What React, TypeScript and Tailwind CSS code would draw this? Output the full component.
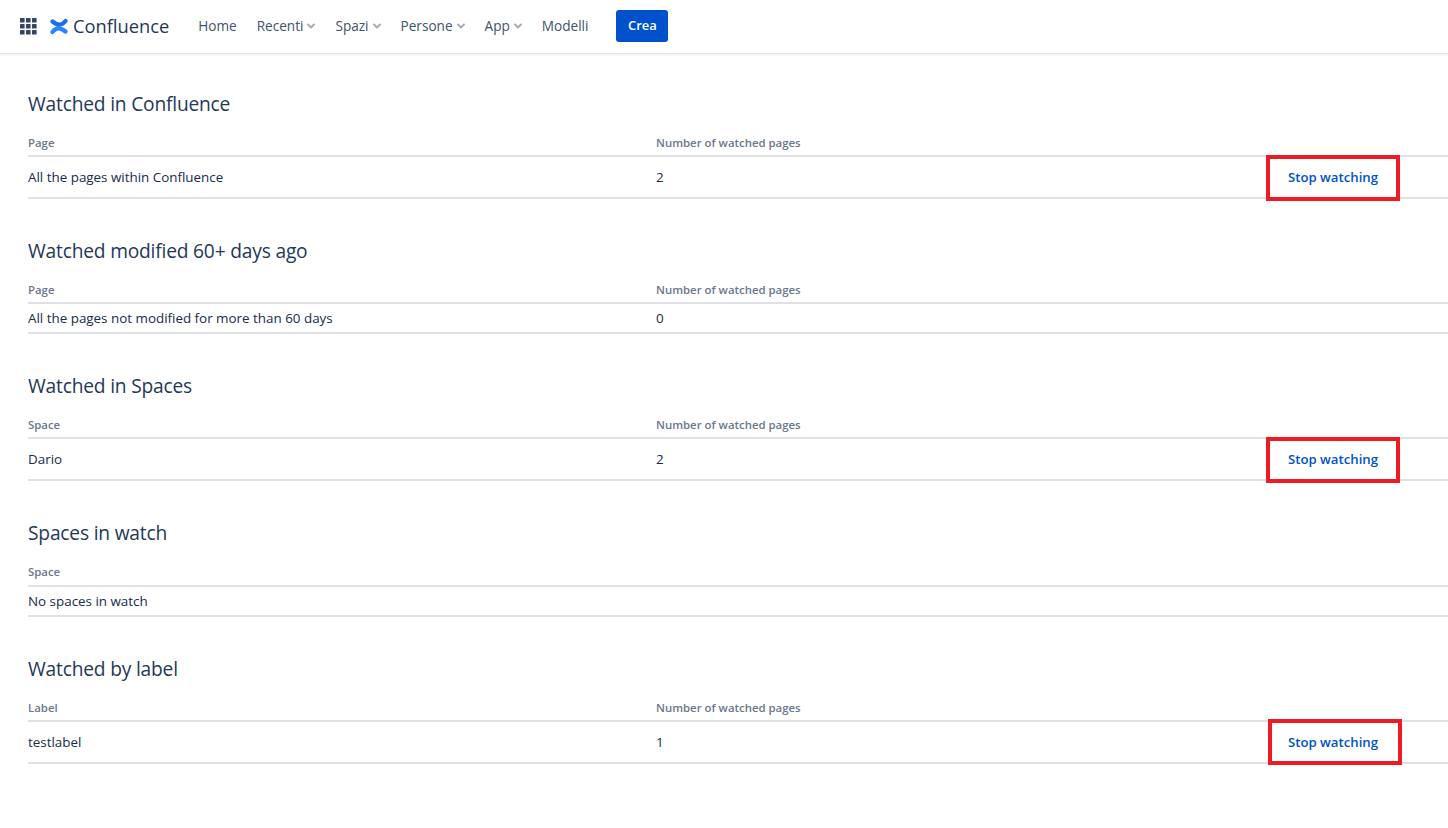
import React from "react";

const Chevron = () => (
  <svg width="8" height="12" viewBox="0 0 8 12" className="ml-[4px] mt-[1px]">
    <path d="M1 4.500l3 3 3-3" fill="none" stroke="#a5adba" strokeWidth="2" strokeLinecap="round" strokeLinejoin="round" />
  </svg>
);

const NavItem = ({ label, chevron }: { label: string; chevron?: boolean }) => (
  <div className="flex items-center text-[13.6px] font-medium text-[#42526e]">
    <span>{label}</span>
    {chevron && <Chevron />}
  </div>
);

const Row = ({ a, b, action, box, h }: { a: string; b?: string; action?: boolean; box?: number; h: string }) => (
  <div className={`grid grid-cols-[628px_1fr_auto] items-center border-b-2 border-[#dfe1e6] pt-[1px] text-[13.4px] text-[#172b4d] ${h}`}>
    <div>{a}</div>
    <div>{b}</div>
    {action && (
      <div className="relative mr-[70px] text-[13.2px] font-semibold text-[#0052cc]">
        Stop watching
        <div className={`absolute h-[46px] w-[134px] border-4 border-[#ed1c24] ${box === 1 ? "top-[-14px] left-[-20px]" : "top-[-13px] left-[-22px]"}`} />
      </div>
    )}
  </div>
);

const Section = ({ title, c1, c2, head = "h-[39px] pb-[4px]", children }: { title: string; c1: string; c2?: string; head?: string; children: React.ReactNode }) => (
  <section className="mb-[38px] pl-[28px]">
    <h2 className="h-[28px] text-[19.2px] leading-[28px] font-normal tracking-[-0.01em] text-[#253858]">{title}</h2>
    <div className={`grid grid-cols-[628px_1fr] items-end border-b-2 border-[#dfe1e6] text-[11.4px] font-semibold text-[#6b778c] ${head}`}>
      <div>{c1}</div>
      <div>{c2}</div>
    </div>
    {children}
  </section>
);

export default function App() {
  return (
    <div className="min-h-[828px] overflow-hidden bg-white font-['Open_Sans','Noto_Sans',sans-serif]">
      <header className="flex h-[54px] items-center border-b border-[#e4e6ea] pb-[1px] pl-[20px] shadow-[0_1px_2px_rgba(9,30,66,0.08)]">
        <svg width="17" height="17" viewBox="0 0 17 17" fill="#344563">
          {[0, 6, 12].flatMap((y) =>
            [0, 6, 12].map((x) => <rect key={`${x}-${y}`} x={x} y={y} width="4.6" height="4.6" rx="0.6" />)
          )}
        </svg>
        <svg width="18" height="17" viewBox="0 0 18 17" className="ml-[13px]">
          <path d="M2.500 14C6 9.500 10 9 15.500 13.500" fill="none" stroke="#2684ff" strokeWidth="4.200" strokeLinecap="round" />
          <path d="M15.500 3C12 7.500 8 8 2.500 3.500" fill="none" stroke="#1c6fe6" strokeWidth="4.200" strokeLinecap="round" />
        </svg>
        <span className="ml-[5px] text-[18.3px] text-[#253858]">Confluence</span>
        <nav className="ml-[29px] flex items-center gap-[20px]">
          <NavItem label="Home" />
          <NavItem label="Recenti" chevron />
          <NavItem label="Spazi" chevron />
          <NavItem label="Persone" chevron />
          <NavItem label="App" chevron />
          <NavItem label="Modelli" />
        </nav>
        <button className="ml-[28px] h-[32px] w-[52px] rounded-[3px] bg-[#0052cc] text-[13px] font-semibold text-white">Crea</button>
      </header>
      <main className="pt-[36px]">
        <Section title="Watched in Confluence" c1="Page" c2="Number of watched pages">
          <Row a="All the pages within Confluence" b="2" action h="h-[42px]" />
        </Section>
        <Section title="Watched modified 60+ days ago" c1="Page" c2="Number of watched pages">
          <Row a="All the pages not modified for more than 60 days" b="0" h="h-[30px]" />
        </Section>
        <Section title="Watched in Spaces" c1="Space" c2="Number of watched pages">
          <Row a="Dario" b="2" action h="h-[42px]" />
        </Section>
        <Section title="Spaces in watch" c1="Space" head="h-[40px] pb-[5px]">
          <Row a="No spaces in watch" h="h-[30px]" />
        </Section>
        <Section title="Watched by label" c1="Label" c2="Number of watched pages">
          <Row a="testlabel" b="1" action box={1} h="h-[42px]" />
        </Section>
      </main>
    </div>
  );
}
